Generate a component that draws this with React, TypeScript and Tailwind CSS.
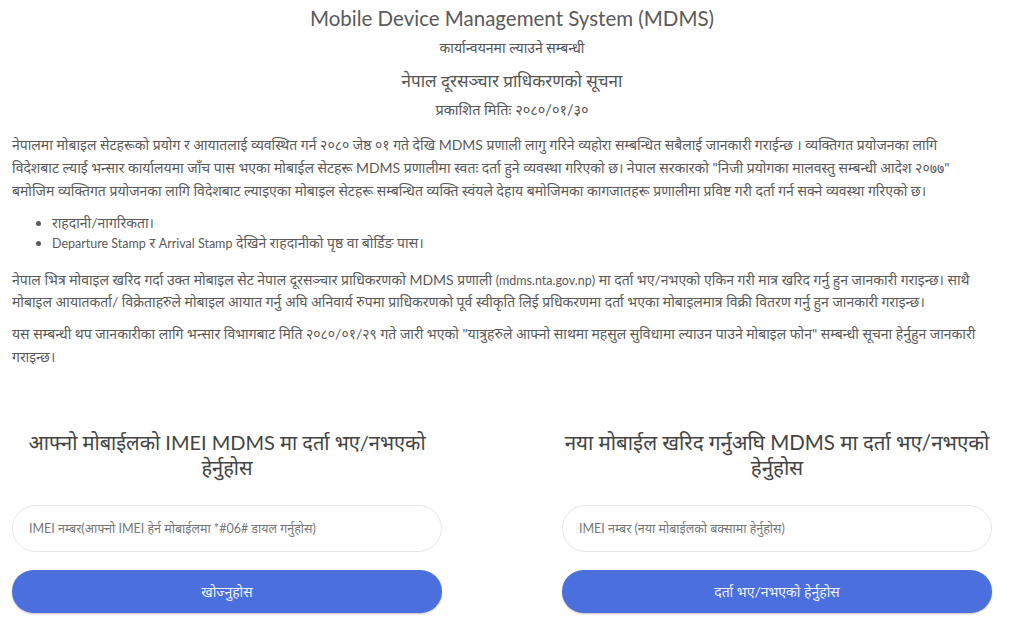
import React from "react";

const font = { fontFamily: "Lato, 'Noto Sans', sans-serif" };

// latin runs in the notice are set a little smaller, like the source page
const Latin = ({ children }: { children: React.ReactNode }) => (
  <span className="text-[12.5px]">{children}</span>
);

const CheckCard = ({
  title,
  titleLine2,
  placeholder,
  button,
  titleSize,
}: {
  title: string;
  titleLine2: string;
  placeholder: string;
  button: string;
  titleSize: string;
}) => (
  <div className="w-[430px] flex flex-col items-center">
    <h2
      className={`${titleSize} leading-[25px] text-[#444] text-center whitespace-nowrap`}
    >
      {title}
      <br />
      {titleLine2}
    </h2>
    <input
      type="text"
      placeholder={placeholder}
      className="mt-[25px] w-full h-[47px] rounded-full border border-[#e6e6e6] bg-white px-[16px] text-[12.5px] text-[#555] placeholder:text-[#777] outline-none"
    />
    <button className="mt-[18px] w-full h-[43px] rounded-full bg-[#4b6fdc] text-[14px] text-[#eef2fb] shadow-[0_1px_2px_rgba(0,0,0,0.25)]">
      {button}
    </button>
  </div>
);

export default function App() {
  return (
    <div className="w-full min-h-screen bg-white text-[#585858]" style={font}>
      <div className="px-3 pt-[5px]">
        {/* Header */}
        <div className="flex flex-col items-center">
          <h1 className="text-[20.5px] leading-[27px] text-[#5a5a5a]">
            Mobile Device Management System (MDMS)
          </h1>
          <p className="mt-[7px] text-[14px] leading-[18px] text-[#555]">
            कार्यान्वयनमा ल्याउने सम्बन्धी
          </p>
          <h2 className="mt-[13px] text-[17px] leading-[22px] text-[#555]">
            नेपाल दूरसञ्चार प्राधिकरणको सूचना
          </h2>
          <p className="mt-[9px] text-[14.5px] leading-[18px] text-[#555]">
            प्रकाशित मितिः २०८०/०१/३०
          </p>
        </div>

        {/* Notice body */}
        <div className="mt-[14px] text-[14px] leading-[23px] text-[#5a5a5a]">
          <p>
            नेपालमा मोबाइल सेटहरूको प्रयोग र आयातलाई व्यवस्थित गर्न २०८० जेष्ठ ०१ गते देखि MDMS प्रणाली लागु गरिने व्यहोरा सम्बन्धित सबैलाई जानकारी गराईन्छ । व्यक्तिगत प्रयोजनका लागि
            <br />
            विदेशबाट ल्याई भन्सार कार्यालयमा जाँच पास भएका मोबाईल सेटहरू MDMS प्रणालीमा स्वतः दर्ता हुने व्यवस्था गरिएको छ। नेपाल सरकारको "निजी प्रयोगका मालवस्तु सम्बन्धी आदेश २०७७"
            <br />
            बमोजिम व्यक्तिगत प्रयोजनका लागि विदेशबाट ल्याइएका मोबाइल सेटहरू सम्बन्धित व्यक्ति स्वंयले देहाय बमोजिमका कागजातहरू प्रणालीमा प्रविष्ट गरी दर्ता गर्न सक्ने व्यवस्था गरिएको छ।
          </p>
          <ul className="mt-[11px] list-disc pl-[40px] leading-[20px]">
            <li>राहदानी/नागरिकता।</li>
            <li>
              <Latin>Departure Stamp</Latin> र <Latin>Arrival Stamp</Latin> देखिने राहदानीको पृष्ठ वा बोर्डिङ पास।
            </li>
          </ul>
          <p className="mt-[15px] leading-[21px]">
            नेपाल भित्र मोवाइल खरिद गर्दा उक्त मोबाइल सेट नेपाल दूरसञ्चार प्राधिकरणको MDMS प्रणाली <Latin>(mdms.nta.gov.np)</Latin> मा दर्ता भए/नभएको एकिन गरी मात्र खरिद गर्नु हुन जानकारी गराइन्छ। साथै
            <br />
            मोबाइल आयातकर्ता/ विक्रेताहरुले मोबाइल आयात गर्नु अघि अनिवार्य रुपमा प्राधिकरणको पूर्व स्वीकृति लिई प्रधिकरणमा दर्ता भएका मोबाइलमात्र विक्री वितरण गर्नु हुन जानकारी गराइन्छ।
          </p>
          <p className="mt-[10px]">
            यस सम्बन्धी थप जानकारीका लागि भन्सार विभागबाट मिति २०८०/०१/२९ गते जारी भएको "यात्रुहरुले आफ्नो साथमा महसुल सुविधामा ल्याउन पाउने मोबाइल फोन" सम्बन्धी सूचना हेर्नुहुन जानकारी
            <br />
            गराइन्छ।
          </p>
        </div>

        {/* Check forms */}
        <div className="mt-[62px] flex gap-[120px]">
          <CheckCard
            title="आफ्नो मोबाईलको IMEI MDMS मा दर्ता भए/नभएको"
            titleLine2="हेर्नुहोस"
            titleSize="text-[20px]"
            placeholder="IMEI नम्बर(आफ्नो IMEI हेर्न मोबाईलमा *#06# डायल गर्नुहोस)"
            button="खोज्नुहोस"
          />
          <CheckCard
            title="नया मोबाईल खरिद गर्नुअघि MDMS मा दर्ता भए/नभएको"
            titleLine2="हेर्नुहोस"
            titleSize="text-[20.5px]"
            placeholder="IMEI नम्बर (नया मोबाईलको बक्सामा हेर्नुहोस)"
            button="दर्ता भए/नभएको हेर्नुहोस"
          />
        </div>
      </div>
    </div>
  );
}
